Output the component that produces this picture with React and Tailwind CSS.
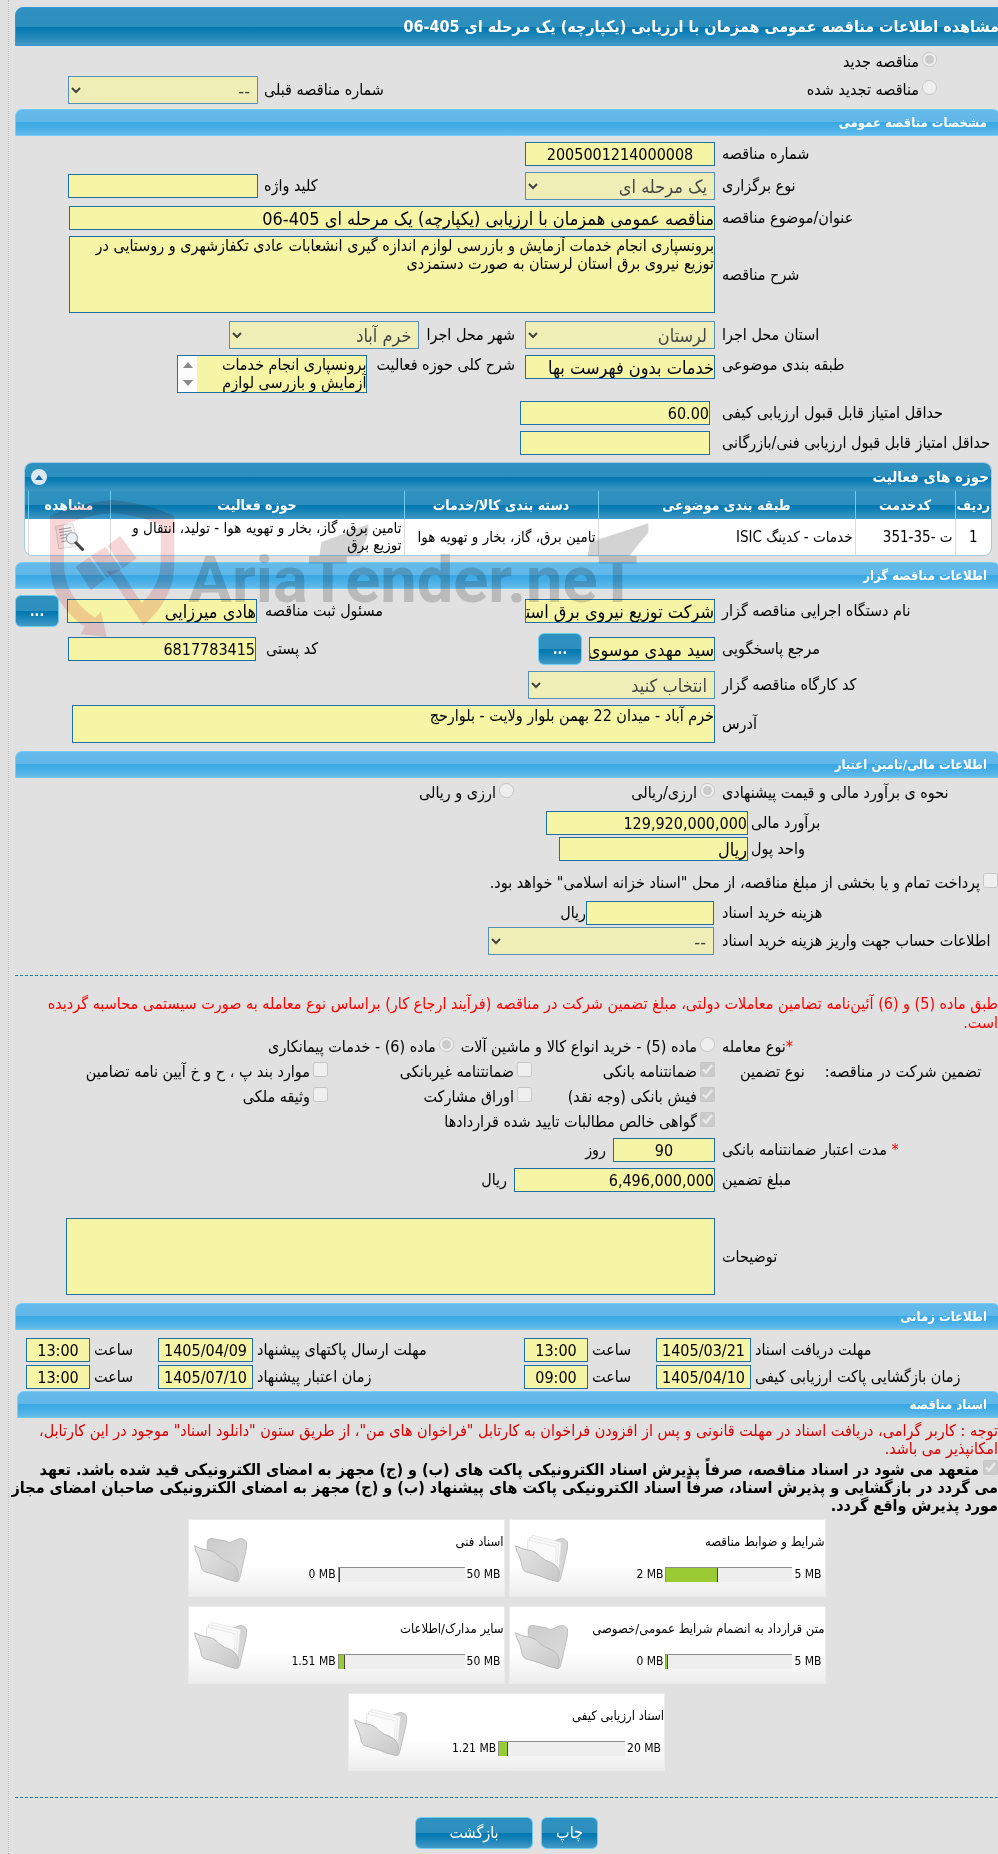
import React from "react";

const BOX = "border border-[#1d6fa5] bg-[#f6f4a5] text-black outline-none";
const DARK = "bg-[linear-gradient(to_bottom,#2f91c0_0%,#2d8fbe_50%,#0277b0_51%,#0f7fb5_65%,#4299c6_100%)]";

function SectionBar({ children }) {
  return (
    <h2 className="-mr-0.5 flex h-[27px] items-center rounded-t-[7px] border border-[#74cdf8] bg-[linear-gradient(to_bottom,#64baea_0%,#61b8e8_48%,#39a8e3_50%,#45aee6_70%,#64bbec_100%)] pr-3 text-[13px] font-bold text-white">
      {children}
    </h2>
  );
}

function Label({ id, className = "", children }) {
  return (
    <label htmlFor={id} className={`w-[276px] shrink-0 whitespace-nowrap text-left ${className}`}>
      {children}
    </label>
  );
}

function Row({ className = "", children }) {
  return <div className={`flex items-center gap-[7px] ${className}`}>{children}</div>;
}

function Input({ id, value = "", size = "text-[16px]", className = "w-[190px]", ...rest }) {
  return <input id={id} readOnly value={value} className={`h-[24px] shrink-0 ${BOX} ${size} ${className}`} {...rest} />;
}

function Select({ id, value, className = "w-[190px]" }) {
  return (
    <select id={id} disabled className={`h-[28px] shrink-0 border border-[#1d6fa5] bg-[#f6f4a5] px-[3px] text-[18px] text-black opacity-70 ${className}`}>
      <option>{value}</option>
    </select>
  );
}

function Choice({ type = "checkbox", name, label, checked = false }) {
  return (
    <label className="flex items-start gap-[3px] whitespace-nowrap">
      <input type={type} name={name} disabled defaultChecked={checked} className="mt-0.5 size-[15px] shrink-0" />
      <span className="leading-6">{label}</span>
    </label>
  );
}

function MoreButton({ label }) {
  return (
    <button aria-label={label} className={`h-[32px] w-[44px] shrink-0 rounded-md border border-[#6ccdf5] text-[14px] font-bold text-white ${DARK}`}>
      ...
    </button>
  );
}

function Folder({ full }) {
  return (
    <svg viewBox="0 -8 166 150" className="h-[50px] w-[55px]" aria-hidden="true">
      <defs>
        <linearGradient id="folderBack" x1="0" y1="0" x2="1" y2="1">
          <stop offset="0" stopColor="#cccccc" />
          <stop offset="1" stopColor="#dcdcdc" />
        </linearGradient>
        <linearGradient id="folderFront" x1="0" y1="0" x2="1" y2="1">
          <stop offset="0" stopColor="#e6e6e6" />
          <stop offset="1" stopColor="#c8c8c8" />
        </linearGradient>
      </defs>
      <path d="M40 45V14Q43 4 54 5L97 13Q105 22 115 15L133 7Q148 1 158 15Q160 24 157 42L137 128Q134 136 128 135L60 112Z" fill="url(#folderBack)" stroke="#bdbdbd" strokeWidth="3" />
      {full && (
        <g fill="#fafafa" stroke="#e0e0e0" strokeWidth="2">
          <path d="M52 -5L140 17L130 116L50 80Z" />
          <path d="M44 2L132 23L126 112L46 80Z" />
          <path d="M38 9L124 30L122 106L40 76Z" />
        </g>
      )}
      <path d="M2 27Q20 38 40 40Q62 43 76 60Q90 72 108 77Q132 88 134 112Q133 128 128 135Q100 130 72 117L31 105Q22 100 20 82Q16 60 5 42Z" fill="url(#folderFront)" stroke="#b9b9b9" strokeWidth="3" />
    </svg>
  );
}

function FolderCard({ title, used, total, percent, full }) {
  return (
    <article className="flex h-[78px] w-[317px] items-start border border-[#ebebeb] bg-[linear-gradient(to_bottom,#ffffff_60%,#ededed_100%)] text-[12px]">
      <div className="flex min-w-0 flex-1 flex-col">
        <h3 className="mt-3 h-5 whitespace-nowrap text-[13px] leading-5">{title}</h3>
        <div dir="ltr" className="mt-3.5 flex items-center justify-end gap-0.5 whitespace-nowrap leading-4">
          <span>{used}</span>
          <div className="flex h-[15px] w-[127px] border-l border-t border-[#8c8c8c] bg-[#eeeeee]">
            <div className="h-full border-r border-[#444] bg-[#9acb32]" style={{ width: `${percent}%` }} />
          </div>
          <span className="pr-[3px]">{total}</span>
        </div>
      </div>
      <div className="ml-[5px] mt-3.5 w-[55px] shrink-0">
        <Folder full={full} />
      </div>
    </article>
  );
}

function TimeGroup({ id, label, date, time, labelClass = "" }) {
  return (
    <div className="flex items-center gap-1">
      <label htmlFor={id} className={`whitespace-nowrap text-left ${labelClass}`}>{label}</label>
      <Input id={id} value={date} dir="ltr" className="w-[95px] text-center" />
      <label htmlFor={`${id}-time`} className="w-[60px] text-left">ساعت</label>
      <Input id={`${id}-time`} value={time} dir="ltr" className="w-[64px] text-center" />
    </div>
  );
}

function Watermark() {
  return (
    <div dir="ltr" aria-hidden="true" className="pointer-events-none absolute left-10 top-[495px] mix-blend-multiply">
      <svg viewBox="0 0 1920 450" className="h-[150px] w-[640px]">
        <g fill="#d8323c" fillOpacity="0.2">
          <path d="M215 15C150 20 90 35 30 62V200C30 290 70 350 135 395L122 418L200 425L183 350L165 368C110 330 72 280 72 200V90C120 70 170 58 215 55C265 58 320 70 362 90V200C362 250 340 290 305 325L240 225L200 228L310 390C370 340 403 280 403 200V62C340 35 280 20 215 15Z" />
          <path d="M107 215L148 187L195 252L153 286Z" />
          <path d="M203 152L240 123L290 190L248 220Z" />
          <path d="M153 182L197 155L243 222L200 250Z" />
        </g>
        <g fill="#6e6e6e" opacity="0.3">
          <text x="445" y="320" fontSize="195" fontWeight="700" className="font-[Roboto,sans-serif]">AriaTender.neT</text>
          <path d="M838 184L844 142L985 88V114L960 184Z" />
          <path d="M1643 184L1650 142L1825 85V112L1767 184Z" />
        </g>
      </svg>
    </div>
  );
}

function DocumentIcon() {
  return (
    <svg viewBox="0 0 90 85" className="h-[28px] w-[30px]" aria-hidden="true">
      <path d="M4 10L56 2L72 58L66 72L14 78Z" fill="#f4f4f4" stroke="#c9c9c9" strokeWidth="2" />
      <path d="M14 20L52 14M16 29L54 23M18 38L40 34M20 47L36 44M22 57L38 54" stroke="#9a9a9a" strokeWidth="3" />
      <circle cx="54" cy="46" r="17" fill="#e8eef2" fillOpacity="0.85" stroke="#b0b0b0" strokeWidth="4" />
      <path d="M66 60L86 80" stroke="#444" strokeWidth="9" strokeLinecap="round" />
    </svg>
  );
}

const HEADS = ["ردیف", "کدخدمت", "طبقه بندی موضوعی", "دسته بندی کالا/خدمات", "حوزه فعالیت", "مشاهده"];
const FOLDERS = [
  { title: "شرایط و ضوابط مناقصه", used: "2 MB", total: "5 MB", percent: 41, full: true },
  { title: "اسناد فنی", used: "0 MB", total: "50 MB", percent: 1, full: false },
  { title: "متن قرارداد به انضمام شرایط عمومی/خصوصی", used: "0 MB", total: "5 MB", percent: 1, full: false },
  { title: "سایر مدارک/اطلاعات", used: "1.51 MB", total: "50 MB", percent: 5, full: true },
  { title: "اسناد ارزیابی کیفی", used: "1.21 MB", total: "20 MB", percent: 7, full: true },
];

export default function App() {
  return (
    <div dir="rtl" className="relative overflow-hidden bg-[#e1e1e1] pl-2 font-['DejaVu_Sans_Condensed','DejaVu_Sans',sans-serif] text-[16px] leading-5 text-black">
      <main className="border-l border-dotted border-[#bdbdbd] pb-[7px] pl-1.5 pt-[7px]">
        <h1 className={`-mr-0.5 flex h-[39px] items-center whitespace-nowrap rounded-tl-lg border border-[#2f96dc] text-[16px] font-bold text-white ${DARK}`}>
          مشاهده اطلاعات مناقصه عمومی همزمان با ارزیابی (یکپارچه) یک مرحله ای 405-06
        </h1>

        <div className="mt-0.5 flex h-[28px] items-center pr-[61px]">
          <Choice type="radio" name="kind" label="مناقصه جدید" checked />
        </div>
        <div className="flex h-[28px] items-center justify-between pr-[61px]">
          <Choice type="radio" name="kind" label="مناقصه تجدید شده" />
          <div className="ml-[53px] flex items-center gap-1.5">
            <label htmlFor="previous">شماره مناقصه قبلی</label>
            <Select id="previous" value="--" />
          </div>
        </div>

        <div className="mt-[5px]"><SectionBar>مشخصات مناقصه عمومی</SectionBar></div>
        <section className="mt-1.5 flex flex-col gap-1.5">
          <Row>
            <Label id="number">شماره مناقصه</Label>
            <Input id="number" value="2005001214000008" className="w-[190px] text-center" />
          </Row>
          <Row>
            <Label id="method">نوع برگزاری</Label>
            <Select id="method" value="یک مرحله ای" />
            <div className="ml-[53px] mr-auto flex items-center gap-1.5">
              <label htmlFor="keyword">کلید واژه</label>
              <Input id="keyword" />
            </div>
          </Row>
          <Row>
            <Label id="title">عنوان/موضوع مناقصه</Label>
            <Input id="title" value="مناقصه عمومی همزمان با ارزیابی (یکپارچه) یک مرحله ای 405-06" size="text-[18px]" className="ml-[54px] min-w-0 flex-1" />
          </Row>
          <Row>
            <Label id="description">شرح مناقصه</Label>
            <textarea id="description" readOnly className={`ml-[54px] h-[77px] min-w-0 flex-1 resize-none text-[16px] ${BOX} leading-[18px]`} value="برونسپاری انجام خدمات آزمایش و بازرسی لوازم اندازه گیری انشعابات عادی تکفازشهری و روستایی در توزیع نیروی برق استان لرستان به صورت دستمزدی" />
          </Row>
          <Row className="mt-0.5">
            <Label id="province">استان محل اجرا</Label>
            <Select id="province" value="لرستان" />
            <label htmlFor="city" className="mr-[3px]">شهر محل اجرا</label>
            <Select id="city" value="خرم آباد" />
          </Row>
          <Row>
            <Label id="category" className="self-start">طبقه بندی موضوعی</Label>
            <div className="self-start">
              <Input id="category" value="خدمات بدون فهرست بها" size="text-[18px]" />
            </div>
            <label htmlFor="scope" className="mr-[3px] self-start">شرح کلی حوزه فعالیت</label>
            <div className="mr-0.5 flex h-[38px] w-[190px] border border-[#1d6fa5] bg-[#f6f4a5]">
              <textarea id="scope" readOnly className="min-w-0 flex-1 resize-none overflow-hidden text-[16px] leading-[18px] outline-none" value="برونسپاری انجام خدمات آزمایش و بازرسی لوازم" />
              <div className="flex w-[19px] flex-col items-center justify-between bg-[#fcfcfc] py-1.5">
                <svg viewBox="0 0 10 6" className="h-1.5 w-2.5" aria-hidden="true"><path d="M5 0L10 6H0Z" fill="#8a8a8a" /></svg>
                <svg viewBox="0 0 10 6" className="h-1.5 w-2.5" aria-hidden="true"><path d="M5 6L10 0H0Z" fill="#8a8a8a" /></svg>
              </div>
            </div>
          </Row>
          <Row className="mt-0.5">
            <Label id="quality">حداقل امتیاز قابل قبول ارزیابی کیفی</Label>
            <Input id="quality" value="60.00" className="mr-[5px] w-[190px]" />
          </Row>
          <Row>
            <Label id="technical">حداقل امتیاز قابل قبول ارزیابی فنی/بازرگانی</Label>
            <Input id="technical" className="mr-[5px] w-[190px]" />
          </Row>
        </section>

        <section className="ml-[9px] mr-1.5 mt-[7px] overflow-hidden rounded-lg border border-[#a6cbe2] bg-white">
          <div className={`flex h-[28px] items-center justify-between pl-1.5 pr-0.5 text-[15px] font-bold text-white ${DARK}`}>
            <h2>حوزه های فعالیت</h2>
            <button aria-label="بستن" className="flex size-4 items-center justify-center rounded-full bg-[#dce9f5]">
              <svg viewBox="0 0 8 5" className="h-[5px] w-2" aria-hidden="true"><path d="M4 0L8 5H0Z" fill="#1b6fa3" /></svg>
            </button>
          </div>
          <table className="w-full table-fixed border-collapse text-[15px] leading-[17px]">
            <colgroup>
              <col className="w-[36px]" />
              <col className="w-[100px]" />
              <col />
              <col className="w-[194px]" />
              <col className="w-[294px]" />
              <col className="w-[82px]" />
              <col className="w-[3px]" />
            </colgroup>
            <thead>
              <tr className={`h-[28px] text-white ${DARK}`}>
                {HEADS.map((h) => (
                  <th key={h} className="whitespace-nowrap border-l border-[#6ccdf5] text-center text-[14px] font-bold">{h}</th>
                ))}
                <td />
              </tr>
            </thead>
            <tbody>
              <tr className="h-[36px] [&>td]:border-l [&>td]:border-[#dcdcdc] [&>td]:px-0.5">
                <td className="text-center">1</td>
                <td>ت -35-351</td>
                <td>خدمات - کدینگ ISIC</td>
                <td className="whitespace-nowrap">تامین برق، گاز، بخار و تهویه هوا</td>
                <td>تامین برق، گاز، بخار و تهویه هوا - تولید، انتقال و توزیع برق</td>
                <td><button aria-label="مشاهده" className="mx-auto block"><DocumentIcon /></button></td>
                <td className="border-l-0!" />
              </tr>
            </tbody>
          </table>
        </section>

        <div className="mt-1.5"><SectionBar>اطلاعات مناقصه گزار</SectionBar></div>
        <section className="mt-1.5 flex flex-col gap-1.5">
          <Row>
            <Label id="agency">نام دستگاه اجرایی مناقصه گزار</Label>
            <Input id="agency" value="شرکت توزیع نیروی برق استان لرستان" size="text-[18px]" />
            <div className="mr-auto flex items-center gap-2">
              <label htmlFor="registrar">مسئول ثبت مناقصه</label>
              <Input id="registrar" value="هادی میرزایی" size="text-[18px]" />
              <MoreButton label="جزئیات مسئول ثبت مناقصه" />
            </div>
          </Row>
          <Row>
            <Label id="contact">مرجع پاسخگویی</Label>
            <Input id="contact" value="سید مهدی موسوی نژاد" size="text-[18px]" className="w-[126px]" />
            <MoreButton label="جزئیات مرجع پاسخگویی" />
            <div className="ml-[53px] mr-auto flex items-center gap-2.5">
              <label htmlFor="postal">کد پستی</label>
              <Input id="postal" value="6817783415" className="w-[188px]" />
            </div>
          </Row>
          <Row>
            <Label id="workshop">کد کارگاه مناقصه گزار</Label>
            <Select id="workshop" value="انتخاب کنید" className="w-[187px]" />
          </Row>
          <Row>
            <Label id="address">آدرس</Label>
            <textarea id="address" readOnly className={`ml-[57px] h-[38px] min-w-0 flex-1 resize-none text-[16px] ${BOX} leading-5`} value="خرم آباد - میدان 22 بهمن بلوار ولایت - بلوارحج" />
          </Row>
        </section>

        <div className="mt-2"><SectionBar>اطلاعات مالی/تامین اعتبار</SectionBar></div>
        <section className="mt-[3px]">
          <div className="flex h-6 gap-[7px]">
            <span className="w-[276px] shrink-0 whitespace-nowrap text-left leading-6">نحوه ی برآورد مالی و قیمت پیشنهادی</span>
            <div className="w-[194px]"><Choice type="radio" name="estimate" label="ارزی/ریالی" checked /></div>
            <Choice type="radio" name="estimate" label="ارزی و ریالی" />
          </div>
          <div className="mt-1.5 flex items-center gap-[3px]">
            <label htmlFor="amount" className="w-[247px] text-left">برآورد مالی</label>
            <Input id="amount" value="129,920,000,000" className="w-[202px]" />
          </div>
          <div className="mt-0.5 flex items-center gap-[3px]">
            <label htmlFor="currency" className="w-[247px] text-left">واحد پول</label>
            <Input id="currency" value="ریال" size="text-[18px]" className="w-[189px]" />
          </div>
          <div className="mt-2.5"><Choice label="پرداخت تمام و یا بخشی از مبلغ مناقصه، از محل &quot;اسناد خزانه اسلامی&quot; خواهد بود." /></div>
          <div className="mt-1.5 flex items-center">
            <label htmlFor="fee" className="ml-2 w-[276px] text-left">هزینه خرید اسناد</label>
            <Input id="fee" className="w-[128px]" />
            <span>ریال</span>
          </div>
          <div className="mt-0.5 flex items-center">
            <label htmlFor="account" className="ml-2 w-[276px] whitespace-nowrap text-left">اطلاعات حساب جهت واریز هزینه خرید اسناد</label>
            <Select id="account" value="--" className="w-[226px]" />
          </div>
        </section>

        <hr className="mt-5 border-t border-dashed border-[#1d7fb5]" />
        <p className="mt-[18px] leading-[19px] text-[#ff0000]">
          طبق ماده (5) و (6) آئین‌نامه تضامین معاملات دولتی، مبلغ تضمین شرکت در مناقصه (فرآیند ارجاع کار) براساس نوع معامله به صورت سیستمی محاسبه گردیده است.
        </p>

        <section className="mt-[3px]">
          <div className="flex h-[25px] gap-[7px]">
            <span className="w-[276px] shrink-0 text-left leading-6"><span className="text-[#ff0000]">*</span>نوع معامله</span>
            <Choice type="radio" name="deal" label="ماده (5) - خرید انواع کالا و ماشین آلات" />
            <Choice type="radio" name="deal" label="ماده (6) - خدمات پیمانکاری" checked />
          </div>
          <div className="flex gap-[7px]">
            <div className="flex h-[25px] w-[276px] shrink-0 justify-end gap-5 whitespace-nowrap leading-6">
              <span>تضمین شرکت در مناقصه:</span>
              <span className="ml-[18px]">نوع تضمین</span>
            </div>
            <div className="grid flex-1 auto-rows-[25px] grid-cols-[183px_204px_1fr]">
              <Choice label="ضمانتنامه بانکی" checked />
              <Choice label="ضمانتنامه غیربانکی" />
              <Choice label="موارد بند پ ، ح و خ آیین نامه تضامین" />
              <Choice label="فیش بانکی (وجه نقد)" checked />
              <Choice label="اوراق مشارکت" />
              <Choice label="وثیقه ملکی" />
              <div className="col-span-3"><Choice label="گواهی خالص مطالبات تایید شده قراردادها" checked /></div>
            </div>
          </div>
          <Row className="mt-[3px]">
            <Label id="validity"><span className="text-[#ff0000]">*</span> مدت اعتبار ضمانتنامه بانکی</Label>
            <Input id="validity" value="90" className="w-[102px] text-center" />
            <span>روز</span>
          </Row>
          <Row className="mt-1.5">
            <Label id="guarantee">مبلغ تضمین</Label>
            <Input id="guarantee" value="6,496,000,000" className="w-[201px]" />
            <span>ریال</span>
          </Row>
          <Row className="mt-[26px]">
            <Label id="notes">توضیحات</Label>
            <textarea id="notes" readOnly className={`ml-[51px] h-[77px] min-w-0 flex-1 resize-none ${BOX}`} value="" />
          </Row>
        </section>

        <div className="mt-2"><SectionBar>اطلاعات زمانی</SectionBar></div>
        <section className="mt-2 flex flex-col gap-[3px]">
          <div className="flex justify-between pl-[11px]">
            <TimeGroup id="receive" label="مهلت دریافت اسناد" date="1405/03/21" time="13:00" labelClass="w-[243px]" />
            <TimeGroup id="send" label="مهلت ارسال پاکتهای پیشنهاد" date="1405/04/09" time="13:00" />
          </div>
          <div className="flex justify-between pl-[11px]">
            <TimeGroup id="open" label="زمان بازگشایی پاکت ارزیابی کیفی" date="1405/04/10" time="09:00" labelClass="w-[243px]" />
            <TimeGroup id="expire" label="زمان اعتبار پیشنهاد" date="1405/07/10" time="13:00" />
          </div>
        </section>

        <div className="ml-0.5 mt-0.5"><SectionBar>اسناد مناقصه</SectionBar></div>
        <p className="mt-1 leading-[18px] text-[#d90000]">
          توجه : کاربر گرامی، دریافت اسناد در مهلت قانونی و پس از افزودن فراخوان به کارتابل "فراخوان های من"، از طریق ستون "دانلود اسناد" موجود در این کارتابل، امکانپذیر می باشد.
        </p>
        <label className="-ml-1.5 mt-0.5 block font-bold leading-[18px]">
          <input type="checkbox" disabled defaultChecked className="ml-1 size-[15px]" />
          متعهد می شود در اسناد مناقصه، صرفاً پذیرش اسناد الکترونیکی پاکت های (ب) و (ج) مجهز به امضای الکترونیکی قید شده باشد. تعهد می{"\u00a0"}گردد در بازگشایی و پذیرش اسناد، صرفاً اسناد الکترونیکی پاکت های پیشنهاد (ب) و (ج) مجهز به امضای الکترونیکی صاحبان امضای مجاز مورد پذیرش واقع گردد.
        </label>

        <section className="mx-auto mt-1 flex max-w-[640px] flex-wrap justify-center gap-x-1 gap-y-[9px]">
          {FOLDERS.map((f) => (
            <FolderCard key={f.title} {...f} />
          ))}
        </section>

        <hr className="mt-[26px] border-t border-dashed border-[#1d7fb5]" />
        <footer className="mt-[19px] flex justify-center gap-2">
          <button className={`h-[32px] w-[57px] rounded-md border border-[#6ccdf5] text-[16px] text-white ${DARK}`}>چاپ</button>
          <button className={`h-[32px] w-[118px] rounded-md border border-[#6ccdf5] text-[16px] text-white ${DARK}`}>بازگشت</button>
        </footer>
      </main>
      <Watermark />
    </div>
  );
}
